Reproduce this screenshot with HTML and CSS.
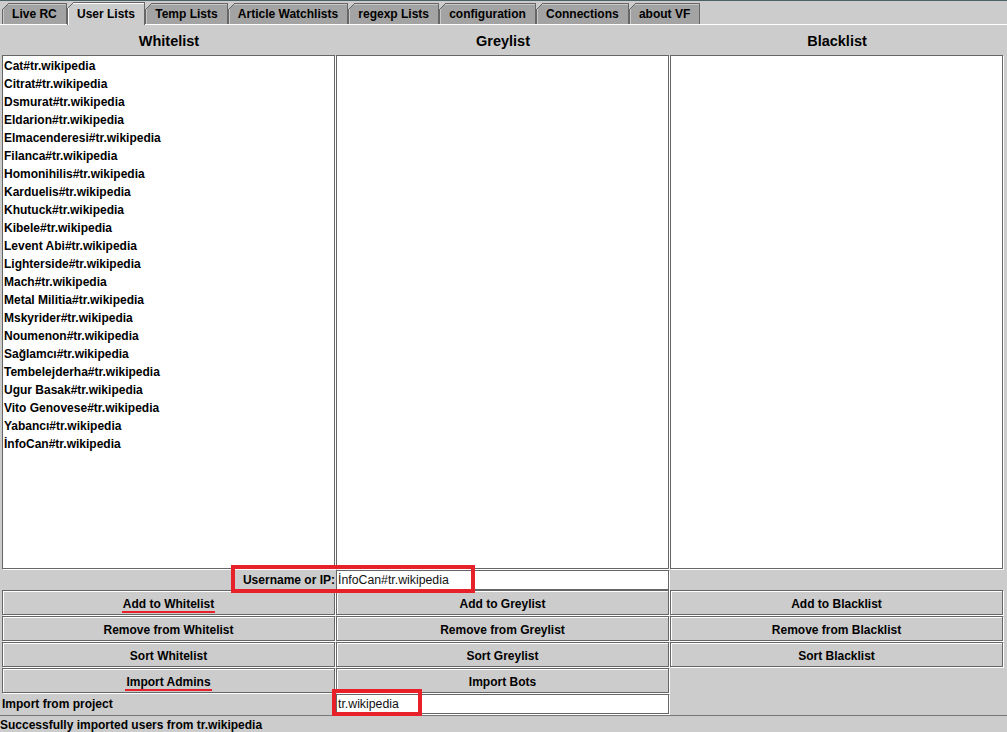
FILE: index.html
```html
<!DOCTYPE html>
<html>
<head>
<meta charset="utf-8">
<link rel="stylesheet" href="styles.css">
</head>
<body>
<div class="app">
  <div class="tabbar">
    <div class="tab">Live RC</div>
    <div class="tab active">User Lists</div>
    <div class="tab">Temp Lists</div>
    <div class="tab">Article Watchlists</div>
    <div class="tab">regexp Lists</div>
    <div class="tab">configuration</div>
    <div class="tab">Connections</div>
    <div class="tab">about VF</div>
  </div>
  <div class="panel">
    <div class="grid3 heads">
      <div class="head">Whitelist</div>
      <div class="head">Greylist</div>
      <div class="head">Blacklist</div>
    </div>
    <div class="grid3 lists">
      <div class="list">
        <div class="item">Cat#tr.wikipedia</div>
        <div class="item">Citrat#tr.wikipedia</div>
        <div class="item">Dsmurat#tr.wikipedia</div>
        <div class="item">Eldarion#tr.wikipedia</div>
        <div class="item">Elmacenderesi#tr.wikipedia</div>
        <div class="item">Filanca#tr.wikipedia</div>
        <div class="item">Homonihilis#tr.wikipedia</div>
        <div class="item">Karduelis#tr.wikipedia</div>
        <div class="item">Khutuck#tr.wikipedia</div>
        <div class="item">Kibele#tr.wikipedia</div>
        <div class="item">Levent Abi#tr.wikipedia</div>
        <div class="item">Lighterside#tr.wikipedia</div>
        <div class="item">Mach#tr.wikipedia</div>
        <div class="item">Metal Militia#tr.wikipedia</div>
        <div class="item">Mskyrider#tr.wikipedia</div>
        <div class="item">Noumenon#tr.wikipedia</div>
        <div class="item">Sağlamcı#tr.wikipedia</div>
        <div class="item">Tembelejderha#tr.wikipedia</div>
        <div class="item">Ugur Basak#tr.wikipedia</div>
        <div class="item">Vito Genovese#tr.wikipedia</div>
        <div class="item">Yabancı#tr.wikipedia</div>
        <div class="item">İnfoCan#tr.wikipedia</div>
      </div>
      <div class="list"></div>
      <div class="list"></div>
    </div>
    <div class="grid3 userrow">
      <div class="ulabel">Username or IP:</div>
      <div class="field">İnfoCan#tr.wikipedia</div>
      <div></div>
    </div>
    <div class="grid3 buttons">
      <div class="btn"><span class="mark">Add to Whitelist</span></div>
      <div class="btn">Add to Greylist</div>
      <div class="btn">Add to Blacklist</div>
      <div class="btn">Remove from Whitelist</div>
      <div class="btn">Remove from Greylist</div>
      <div class="btn">Remove from Blacklist</div>
      <div class="btn">Sort Whitelist</div>
      <div class="btn">Sort Greylist</div>
      <div class="btn">Sort Blacklist</div>
      <div class="btn"><span class="mark">Import Admins</span></div>
      <div class="btn">Import Bots</div>
      <div></div>
    </div>
    <div class="grid3 importrow">
      <div class="ilabel">Import from project</div>
      <div class="field">tr.wikipedia</div>
      <div></div>
    </div>
  </div>
  <div class="status">Successfully imported users from tr.wikipedia</div>
  <div class="redbox r1"></div>
  <div class="redbox r2"></div>
</div>
</body>
</html>
```

FILE: styles.css
```css
html, body {
  margin: 0;
  padding: 0;
  background: #cccccc;
  overflow: hidden;
}
.app {
  position: relative;
  width: 1007px;
  height: 732px;
  font-family: "Liberation Sans", Arial, sans-serif;
  font-size: 12px;
  font-weight: bold;
  color: #000;
}
.tabbar {
  display: flex;
  align-items: flex-end;
  height: 23px;
  border-top: 1px solid #4a6262;
  border-bottom: 1px solid #ffffff;
  padding-left: 2px;
}
.tab {
  position: relative;
  height: 20px;
  line-height: 21px;
  padding: 0 9.1px;
  border: 1px solid #666;
  border-bottom: none;
  background: #a3a3a3;
  box-shadow: inset 1px 1px 0 #c8c8c8;
  white-space: nowrap;
}
.tab::before {
  content: "";
  position: absolute;
  top: -1px;
  left: -1px;
  width: 7px;
  height: 7px;
  background: linear-gradient(to bottom right, #cccccc 0, #cccccc calc(50% - 0.6px), #666 calc(50% - 0.6px), #666 calc(50% + 0.6px), transparent calc(50% + 0.6px));
}
.tab.active {
  height: 22px;
  line-height: 22px;
  margin-bottom: -1px;
  background: #cccccc;
  box-shadow: inset 1px 1px 0 #fff;
  z-index: 1;
}
.panel {
  padding-left: 2px;
}
.grid3 {
  display: grid;
  grid-template-columns: repeat(3, 334px);
}
.heads {
  height: 30px;
}
.head {
  font-size: 14.5px;
  line-height: 33px;
  text-align: center;
}
.lists {
  height: 515px;
}
.list {
  box-sizing: border-box;
  width: 333px;
  height: 514px;
  border: 1px solid #666;
  box-shadow: 1px 1px 0 #fff;
  background: #fff;
  padding: 1px 0 0 1px;
}
.item {
  height: 18px;
  line-height: 18px;
  white-space: nowrap;
}
.userrow {
  height: 20px;
}
.ulabel {
  line-height: 20px;
  text-align: right;
  padding-right: 1px;
}
.field {
  box-sizing: border-box;
  width: 333px;
  height: 20px;
  line-height: 18px;
  border: 1px solid #666;
  box-shadow: 1px 1px 0 #fff;
  background: #fff;
  padding-left: 1px;
  font-weight: normal;
  font-size: 12.3px;
  color: #111;
  white-space: nowrap;
}
.buttons {
  grid-auto-rows: 26px;
}
.btn {
  box-sizing: border-box;
  width: 333px;
  height: 25px;
  padding-top: 2px;
  border: 1px solid #666;
  box-shadow: inset 1px 1px 0 #fff, 1px 1px 0 #fff;
  display: flex;
  align-items: center;
  justify-content: center;
  white-space: nowrap;
}
.mark {
  display: inline-block;
  line-height: 13px;
  padding: 0 1px;
  border-bottom: 2px solid #e8202a;
  margin-top: 3px;
}
.importrow {
  height: 21px;
}
.ilabel {
  line-height: 21px;
}
.status {
  border-top: 1px solid #777;
  height: 16px;
  line-height: 19px;
  white-space: nowrap;
}
.redbox {
  position: absolute;
  box-sizing: border-box;
  border: 4px solid #e8202a;
}
.r1 {
  left: 231px;
  top: 565px;
  width: 244px;
  height: 28px;
}
.r2 {
  left: 332px;
  top: 689px;
  width: 90px;
  height: 27px;
}
```
